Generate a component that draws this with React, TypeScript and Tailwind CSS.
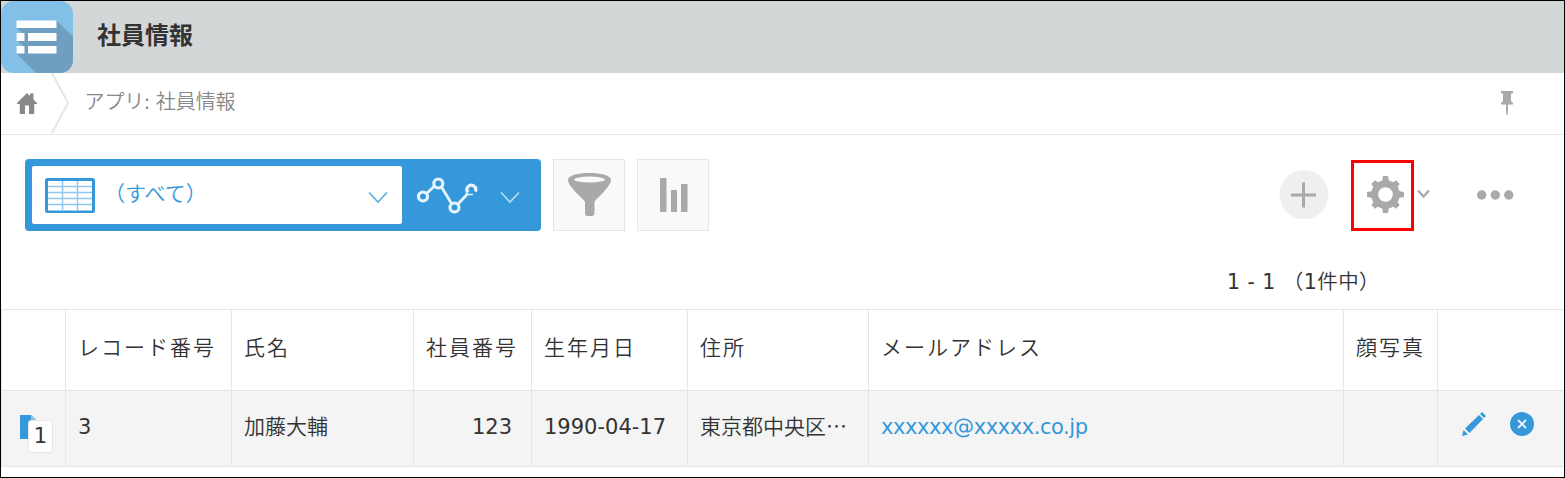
import type { ReactNode } from 'react';

const columns = [
  { label: '', value: '' },
  { label: 'レコード番号', value: '3' },
  { label: '氏名', value: '加藤大輔' },
  { label: '社員番号', value: '123' },
  { label: '生年月日', value: '1990-04-17' },
  { label: '住所', value: '東京都中央区⋯' },
  { label: 'メールアドレス', value: 'xxxxxx@xxxxx.co.jp' },
  { label: '顔写真', value: '' },
  { label: '', value: '' },
];

const cellStyles = [
  '',
  'pt-[21px]',
  "pt-[19px] font-['Noto_Sans_CJK_JP',sans-serif] font-[350]",
  'pr-[19px] pt-[21px] text-right',
  'pt-[21px]',
  "pt-[19px] font-['Noto_Sans_CJK_JP',sans-serif] font-[350]",
  'pt-[21px] tracking-[-0.42px] text-[#3498db]',
  '',
  '',
];

const grid =
  'grid grid-cols-[65px_166px_182px_118px_156px_181px_475px_94px_126px]';

function AppIcon() {
  return (
    <svg width="72" height="72" viewBox="0 0 72 72" className="block shrink-0">
      <defs>
        <clipPath id="tile">
          <rect width="72" height="72" rx="13" />
        </clipPath>
      </defs>
      <g clipPath="url(#tile)">
        <rect width="72" height="72" fill="#83c0e7" />
        <path d="M55.500 19.500L72 35.500V72H35L15.500 52.500V46L22 45L15.500 39V33L23 34L15.500 26.500Z" fill="#6e9fc1" />
      </g>
      <path
        d="M15.500 19.500h40v7.500h-40zM15.500 32h8v8h-8zM27 32h28.500v8H27zM15.500 45h8v7.500h-8zM27 45h28.500v7.500H27z"
        fill="#fff"
      />
    </svg>
  );
}

function Chevron({ color }: { color: string }) {
  return (
    <svg width="20" height="14" viewBox="0 0 20 14" fill="none" stroke={color} strokeWidth="1.700">
      <path d="M1 1.500L10 11L19 1.500" />
    </svg>
  );
}

function TableIcon() {
  return (
    <svg width="50" height="35" viewBox="0 0 50 35" fill="none" className="mt-px shrink-0">
      <rect width="50" height="35" rx="2.500" fill="#3498db" />
      <rect x="3" y="3" width="44" height="29.500" fill="#fff" />
      <path d="M3 8.500h44M3 14.500h44M3 20.500h44M3 26.500h44M17.500 3v29M32.500 3v29" stroke="#8fc6eb" strokeWidth="1.500" />
    </svg>
  );
}

function GraphIcon() {
  return (
    <svg width="61" height="37" viewBox="0 0 61 37" fill="none" stroke="#e8f4fc">
      <path d="M10 16L17 9.500M24.500 10L34.500 26.500M41.500 26.500L51 16.500" strokeWidth="2.800" />
      <path d="M48 17.500H56" strokeWidth="1.500" />
      <g strokeWidth="3.200">
        <circle cx="6" cy="19.500" r="4.500" />
        <circle cx="21.300" cy="6.500" r="4.500" />
        <circle cx="37.500" cy="30.500" r="4.500" />
        <path d="M51 15.500A4.400 4.400 0 1 1 58.300 14.500" />
      </g>
    </svg>
  );
}

function GearIcon() {
  return (
    <svg width="37" height="37" viewBox="0 0 37 37">
      <g fill="#a9a9a9">
        <path d="M16 0h5l1.200 7h-7.400zM16 37h5l1.200-7h-7.400zM0 16v5l7 1.200v-7.400zM37 16v5l-7 1.200v-7.400z" />
        <g transform="rotate(45 18.500 18.500)">
          <path d="M16 1h5l1.200 7h-7.400zM16 36h5l1.200-7h-7.400zM1 16v5l7 1.200v-7.400zM36 16v5l-7 1.200v-7.400z" />
        </g>
      </g>
      <circle cx="18.500" cy="18.500" r="10.800" fill="none" stroke="#a9a9a9" strokeWidth="7" />
    </svg>
  );
}

function ToolButton({ children }: { children: ReactNode }) {
  return (
    <button className="flex size-[72px] items-center justify-center border border-[#e3e7e8] bg-[#f7f9fa]">
      {children}
    </button>
  );
}

export default function App() {
  return (
    <div className="flex h-[478px] w-[1565px] flex-col overflow-hidden border border-black bg-white font-['DejaVu_Sans','Noto_Sans_CJK_JP',sans-serif] text-[21px] leading-[30px] text-[#333]">
      <header className="flex h-[72px] shrink-0 bg-[#d3d7d7]">
        <AppIcon />
        <h1 className="ml-6 mt-[17px] font-['Noto_Sans_CJK_JP',sans-serif] text-[24px] font-bold leading-[32px]">社員情報</h1>
      </header>

      <nav className="flex h-[62px] shrink-0 border-b border-[#e3e7e8]">
        <svg width="20" height="21" viewBox="0 0 20 21" className="ml-[15.500px] mt-[20px] shrink-0" fill="#888">
          <path d="M10 0L13 3V0.500H16.500V6.500L20 10V11H17.200V21H12V12.500H8V21H2.800V11H0V10Z" />
        </svg>
        <svg width="18" height="60" viewBox="0 0 18 60" className="ml-[14px] shrink-0" fill="none" stroke="#e3e7e8" strokeWidth="2">
          <path d="M1 0L17 30L1 60" />
        </svg>
        <span className="ml-[16px] mt-[13px] whitespace-nowrap font-['Noto_Sans_CJK_JP',sans-serif] text-[20px] font-[350] tracking-[-0.1px] text-[#888] [word-spacing:2px]">アプリ: 社員情報</span>
        <svg width="12" height="24" viewBox="0 0 12 24" className="ml-auto mr-[51px] mt-[18px]" fill="#a9a9a9">
          <path d="M0 0H12V2.500H10V10L12 12V13.500H7V20L6.500 24H5.500L5 20V13.500H0V12L2 10V2.500H0Z" />
        </svg>
      </nav>

      <div className="flex h-[96px] shrink-0 pl-6 pt-6">
        <div className="flex h-[72px] w-[516px] shrink-0 items-center rounded bg-[#3498db] pl-[7px]">
          <div className="flex h-[58px] w-[370px] items-center rounded-[2px] bg-white pl-[13px] pr-[14px]">
            <TableIcon />
            <span className="mb-1.5 ml-[9px] whitespace-nowrap font-['Noto_Sans_CJK_JP',sans-serif] text-[21px] font-[350] text-[#3498db]">（すべて）</span>
            <span className="ml-auto mt-[6px]"><Chevron color="#5dade2" /></span>
          </div>
          <span className="ml-[15px]"><GraphIcon /></span>
          <span className="ml-[22px] mt-[6px]"><Chevron color="#b8dcf3" /></span>
        </div>
        <div className="ml-3 flex gap-3">
          <ToolButton>
            <svg width="43" height="43" viewBox="0 0 43 43" className="-mt-0.5">
              <path d="M0 7C0 2.500 10 0 21.500 0S43 2.500 43 7C43 14 26.500 27 26.500 29V40Q26.500 43 23.500 43H19.500Q17 43 17 40V29C17 27 0 14 0 7Z" fill="#a9a9a9" />
              <ellipse cx="21.500" cy="6.500" rx="15.500" ry="3" fill="#f7f9fa" />
            </svg>
          </ToolButton>
          <ToolButton>
            <svg width="28" height="34" viewBox="0 0 28 34" fill="#a9a9a9" className="ml-[2px]">
              <path d="M0 0h6.500v34H0zM11 12h6v22h-6zM21 6h6.500v28H21z" />
            </svg>
          </ToolButton>
        </div>
        <div className="ml-auto flex h-[72px] items-center">
          <svg width="50" height="50" viewBox="0 0 50 50">
            <circle cx="25" cy="24.500" r="24.500" fill="#efefef" />
            <path d="M24.500 12.500v25M12 25h25" stroke="#a9a9a9" strokeWidth="3" />
          </svg>
          <div className="ml-[22px] mt-[1px] flex h-[71px] w-[63px] items-center justify-center border-[3px] border-[#f00] pb-[2px] pl-[6px]">
            <GearIcon />
          </div>
          <svg width="13" height="10" viewBox="0 0 13 10" fill="none" stroke="#a9a9a9" strokeWidth="2.500" className="-mt-0.5 ml-[3px]">
            <path d="M1 1.500L6.500 7.500L12 1.500" />
          </svg>
          <svg width="37" height="10" viewBox="0 0 37 10" fill="#a9a9a9" className="ml-[47px] mr-[50px]">
            <circle cx="4.700" cy="5" r="4.700" />
            <circle cx="18.300" cy="5" r="4.700" />
            <circle cx="31.800" cy="5" r="4.700" />
          </svg>
        </div>
      </div>

      <div className="flex h-[78px] shrink-0 justify-end pr-[184px] pt-[34px] text-[20.500px]">
        <span className="w-[153px] whitespace-pre tracking-[0.450px]">
          1 - 1 <span className="font-['Noto_Sans_CJK_JP',sans-serif] font-[350]">（</span>1<span className="font-['Noto_Sans_CJK_JP',sans-serif] font-[350]">件中）</span>
        </span>
      </div>

      <section className="shrink-0 border-b border-[#e3e7e8]">
        <div className={`${grid} h-[81px] border-t border-[#e3e7e8]`}>
          {columns.map((c, i) => (
            <div key={i} className="border-r border-[#e3e7e8] pl-[12px] pt-[21px] whitespace-nowrap font-['Noto_Sans_CJK_JP',sans-serif] font-[350] tracking-[2px] first:border-l last:border-r-0">
              {c.label}
            </div>
          ))}
        </div>
        <div className={`${grid} h-[76px] border-t border-[#e3e7e8] bg-[#f4f4f4]`}>
          {columns.map((c, i) => (
            <div
              key={i}
              className={`border-r border-[#e3e7e8] pl-[12px] whitespace-nowrap first:border-l last:border-r-0 ${cellStyles[i]}`}
            >
              {i === 0 && (
                <div className="relative ml-[6px] mt-[24px] h-[38px] w-[33px]">
                  <svg width="18" height="24" viewBox="0 0 18 24">
                    <path d="M0 0H11L18 7V24H0Z" fill="#3498db" />
                    <path d="M11 0V7H18Z" fill="#8fc6eb" />
                  </svg>
                  <span className="absolute left-[8px] top-[5px] flex h-[33px] w-[25px] items-center justify-center rounded-[3px] border border-[#e3e7e8] bg-white pb-[2px] text-[21px]">1</span>
                </div>
              )}
              {i === 8 && (
                <div className="ml-[12px] mt-[21px] flex gap-6">
                  <svg width="24" height="24" viewBox="0 0 24 24" fill="#3498db">
                    <path d="M0 24L1.500 18L6 22.500ZM3 16.500L17 3L21 7L7.500 21ZM18 2L20 0L24 4L22 6Z" />
                  </svg>
                  <svg width="24" height="24" viewBox="0 0 24 24">
                    <circle cx="12" cy="12" r="12" fill="#3498db" />
                    <path d="M8 8L16 16M16 8L8 16" stroke="#e5f3fb" strokeWidth="2" />
                  </svg>
                </div>
              )}
              {c.value}
            </div>
          ))}
        </div>
      </section>
    </div>
  );
}
